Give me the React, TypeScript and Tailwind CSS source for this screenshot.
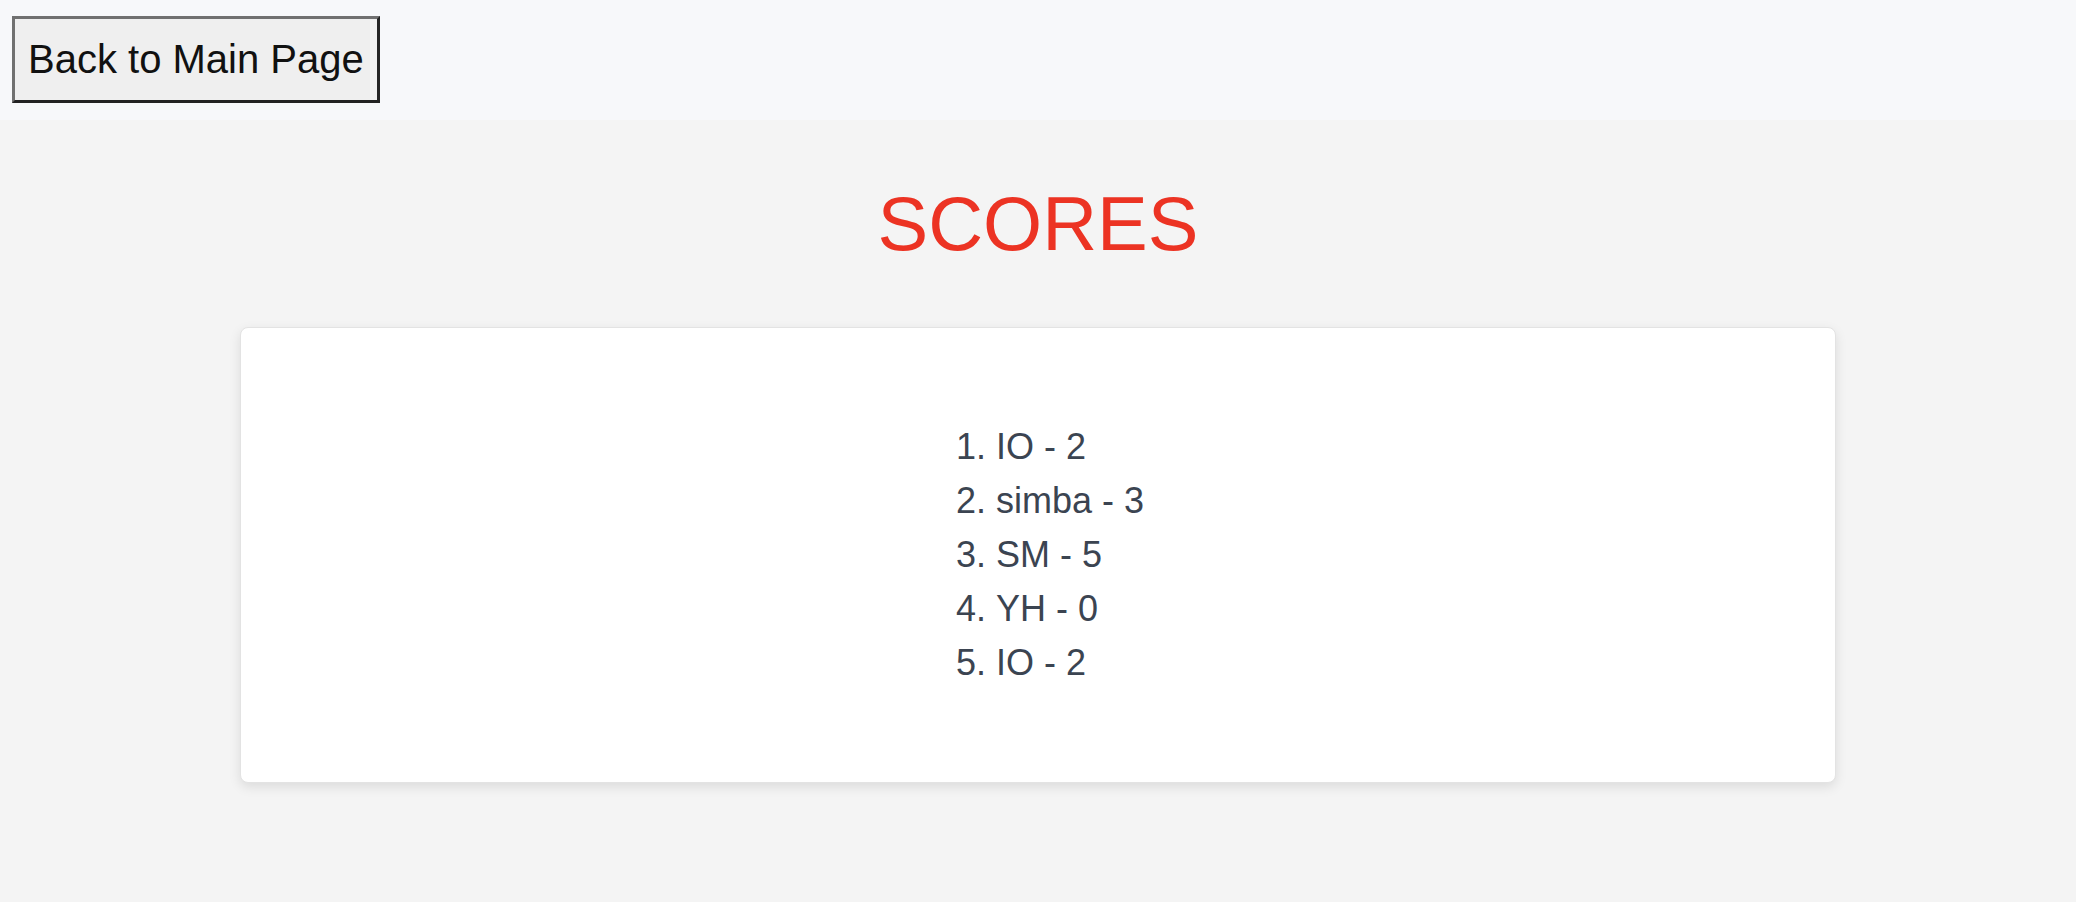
import React from 'react';

const scores = [
    { name: 'IO', score: 2 },
    { name: 'simba', score: 3 },
    { name: 'SM', score: 5 },
    { name: 'YH', score: 0 },
    { name: 'IO', score: 2 },
];

const App: React.FC = () => {
    return (
        <div className="min-h-screen bg-[#f4f4f4] font-['Liberation_Sans',Arial,sans-serif]">
            <header className="h-[120px] bg-[#f7f8fa] pt-[16px] pl-[12px]">
                <button className="bg-[#efefef] text-[#111] text-[40px] leading-[47px] px-[13px] py-[17px] border-[3px] border-solid border-t-[#707070] border-l-[#707070] border-b-[#222] border-r-[#222]">
                    Back to Main Page
                </button>
            </header>

            <h1 className="mt-[66px] mb-[65px] text-center text-[76px] leading-none text-[#ec3323]">SCORES</h1>

            <div className="w-[1596px] mx-auto bg-white rounded-lg border border-[#e3e3e3] shadow-[0_4px_12px_rgba(0,0,0,0.1)] py-[92px]">
                <ol className="w-fit mx-auto pl-[64px] list-decimal text-[36px] leading-[54px] text-[#3b4451]">
                    {scores.map((s, i) => (
                        <li key={i}>{s.name} - {s.score}</li>
                    ))}
                </ol>
            </div>
        </div>
    );
};

export default App;
